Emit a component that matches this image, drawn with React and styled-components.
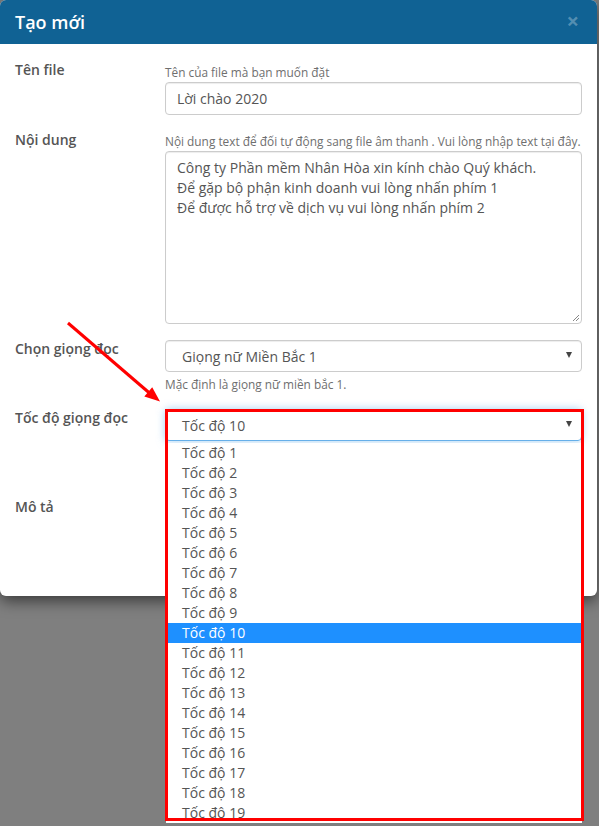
import React from "react";
import styled, { createGlobalStyle } from "styled-components";

const Global = createGlobalStyle`
  html, body { margin: 0; padding: 0; }
  body {
    background: #7f7f7f;
    font-family: "Open Sans", "Noto Sans", sans-serif;
    overflow: hidden;
  }
  #root { height: 826px; overflow: hidden; position: relative; }
`;

const Stage = styled.div`
  position: relative;
  width: 599px;
  height: 826px;
`;

const Modal = styled.div`
  position: relative;
  width: 597px;
  background: #fff;
  border-radius: 6px;
  box-shadow: 0 5px 15px rgba(0, 0, 0, 0.55);
`;

const Header = styled.div`
  height: 44px;
  box-sizing: border-box;
  padding: 0 15px;
  background: #106294;
  border-radius: 6px 6px 0 0;
  display: flex;
  align-items: center;
  justify-content: space-between;
`;

const Title = styled.h4`
  margin: 0;
  color: #fff;
  font-size: 18px;
  font-weight: 600;
  line-height: 24px;
`;

const Close = styled.span`
  color: rgba(255, 255, 255, 0.28);
  font-size: 22px;
  font-weight: 700;
  line-height: 1;
  margin-right: 3px;
  margin-top: -5px;
`;

const Body = styled.div`
  padding: 16px 15px 19px;
`;

const Row = styled.div`
  display: grid;
  grid-template-columns: 150px 417px;
  margin-bottom: ${(p) => p.$gap ?? 15}px;
`;

const Label = styled.label`
  font-size: 14px;
  font-weight: 600;
  line-height: 20px;
  color: #555;
`;

const Control = styled.div`
  display: flex;
  flex-direction: column;
  position: relative;
`;

const Help = styled.div`
  font-size: 11.85px;
  line-height: 16px;
  color: #6f6f6f;
  margin: ${(p) => (p.$below ? "4px 0 0" : `${p.$top ?? 4}px 0 2px`)};
  white-space: nowrap;
`;

const Field = styled.div`
  box-sizing: border-box;
  height: ${(p) => p.$h}px;
  border: 1px solid #ccc;
  border-radius: 4px;
  box-shadow: inset 0 1px 1px rgba(0, 0, 0, 0.075);
  padding: ${(p) => (p.$multi ? "6px 11px" : "0 11px")};
  font-size: 14px;
  line-height: ${(p) => (p.$multi ? "20px" : `${p.$h - 2}px`)};
  color: #555;
  white-space: pre-line;
  position: relative;
`;

const Grip = styled.svg`
  position: absolute;
  right: 1px;
  bottom: 1px;
`;

const SelectBox = styled.div`
  box-sizing: border-box;
  height: 32px;
  margin-top: 1px;
  border: 1px solid ${(p) => (p.$focus ? "#66afe9" : "#ccc")};
  border-radius: 4px;
  box-shadow: ${(p) =>
    p.$focus
      ? "inset 0 1px 1px rgba(0,0,0,.075), 0 0 8px rgba(102,175,233,.6)"
      : "inset 0 1px 1px rgba(0,0,0,.075)"};
  padding: 0 9px 0 16px;
  display: flex;
  align-items: center;
  justify-content: space-between;
  font-size: 14px;
  color: #555;
`;

const Caret = styled.span`
  width: 0;
  height: 0;
  border-left: 3.5px solid transparent;
  border-right: 3.5px solid transparent;
  border-top: 6px solid #444;
  margin-top: -2px;
`;

const Popup = styled.ul`
  position: absolute;
  top: 35px;
  left: 1px;
  width: 416px;
  margin: 0;
  padding: 0;
  list-style: none;
  background: #fff;
  z-index: 5;
`;

const Option = styled.li`
  height: 20px;
  line-height: 20px;
  padding-left: 16px;
  font-size: 14px;
  color: ${(p) => (p.$active ? "#fff" : "#555")};
  background: ${(p) => (p.$active ? "#1e90ff" : "transparent")};
`;

const Highlight = styled.div`
  position: absolute;
  top: 1px;
  left: 0;
  width: 419px;
  height: 412px;
  box-sizing: border-box;
  border: 3px solid #ff0000;
  z-index: 6;
  pointer-events: none;
`;

const Arrow = styled.svg`
  position: absolute;
  left: 0;
  top: 0;
  z-index: 7;
  pointer-events: none;
`;

const speeds = Array.from({ length: 19 }, (_, i) => i + 1);

export default function App() {
  return (
    <Stage>
      <Global />
      <Modal>
        <Header>
          <Title>Tạo mới</Title>
          <Close>×</Close>
        </Header>
        <Body>
          <Row>
            <Label>Tên file</Label>
            <Control>
              <Help>Tên của file mà bạn muốn đặt</Help>
              <Field $h={33}>Lời chào 2020</Field>
            </Control>
          </Row>
          <Row>
            <Label>Nội dung</Label>
            <Control>
              <Help $top={3}>
                Nội dung text để đối tự động sang file âm thanh . Vui lòng nhập text tại đây.
              </Help>
              <Field $h={173} $multi>
                {"Công ty Phần mềm Nhân Hòa xin kính chào Quý khách.\nĐể gặp bộ phận kinh doanh vui lòng nhấn phím 1\nĐể được hỗ trợ về dịch vụ vui lòng nhấn phím 2"}
                <Grip width="9" height="9" viewBox="0 0 9 9">
                  <path d="M8 2 L2 8 M8 5 L5 8" stroke="#888" strokeWidth="1" />
                </Grip>
              </Field>
            </Control>
          </Row>
          <Row $gap={16}>
            <Label>Chọn giọng đọc</Label>
            <Control>
              <SelectBox>
                <span>Giọng nữ Miền Bắc 1</span>
                <Caret />
              </SelectBox>
              <Help $below>Mặc định là giọng nữ miền bắc 1.</Help>
            </Control>
          </Row>
          <Row $gap={56}>
            <Label>Tốc độ giọng đọc</Label>
            <Control>
              <SelectBox $focus>
                <span>Tốc độ 10</span>
                <Caret />
              </SelectBox>
              <Popup>
                {speeds.map((n) => (
                  <Option key={n} $active={n === 10}>
                    Tốc độ {n}
                  </Option>
                ))}
              </Popup>
              <Highlight />
            </Control>
          </Row>
          <Row $gap={0}>
            <Label>Mô tả</Label>
            <Control>
              <Field $h={79} $multi style={{ marginTop: 1 }} />
            </Control>
          </Row>
        </Body>
      </Modal>
      <Arrow width="599" height="826" viewBox="0 0 599 826">
        <line x1="68" y1="323" x2="150" y2="393.5" stroke="#f00" strokeWidth="3" />
        <polygon points="160,401.5 144.3,396.6 152.2,387.3" fill="#f00" />
      </Arrow>
    </Stage>
  );
}
